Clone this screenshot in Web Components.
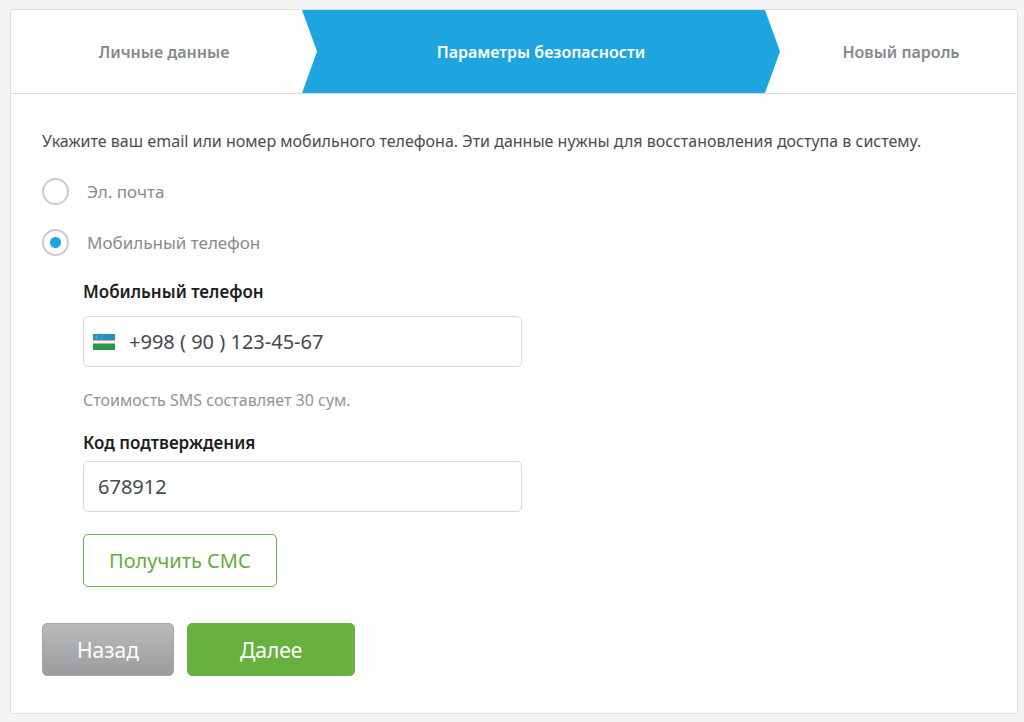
<!DOCTYPE html>
<html lang="ru">
<head>
<meta charset="UTF-8">
<meta name="viewport" content="width=device-width, initial-scale=1">
<title>Параметры безопасности</title>
<style>
    body {
        margin: 0;
        background: #f4f4f4;
        color: #4a4d50;
        font-family: "Noto Sans", "Open Sans", sans-serif;
        font-size: 16px;
        line-height: 24px;
    }
</style>
</head>
<body>
<registration-card>
    <wizard-steps slot="steps">
        <wizard-step>Личные данные</wizard-step>
        <wizard-step active>Параметры безопасности</wizard-step>
        <wizard-step>Новый пароль</wizard-step>
    </wizard-steps>
    <recovery-form>Укажите ваш email или номер мобильного телефона. Эти данные нужны для восстановления доступа в систему.</recovery-form>
</registration-card>

<script>
class RegistrationCard extends HTMLElement {
    constructor() {
        super();
        this.attachShadow({ mode: 'open' });
        this.shadowRoot.innerHTML = `
        <style>
            :host {
                display: block;
                margin: 9px 6px 8px 10px;
                border: 1px solid #dfdfe0;
                border-radius: 4px;
                background: #fefefe;
                overflow: hidden;
            }

            main {
                padding: 35px 31px 37px;
            }
        </style>
        <slot name="steps"></slot>
        <main><slot></slot></main>`;
    }
}

class WizardSteps extends HTMLElement {
    constructor() {
        super();
        this.attachShadow({ mode: 'open' });
        this.shadowRoot.innerHTML = `
        <style>
            nav {
                display: grid;
                grid-template-columns: 291fr 463fr 252fr;
                border-bottom: 1px solid #dcdcdd;
            }
        </style>
        <nav aria-label="Шаги регистрации"><slot></slot></nav>`;
    }
}

class WizardStep extends HTMLElement {
    constructor() {
        super();
        this.attachShadow({ mode: 'open' });
        this.shadowRoot.innerHTML = `
        <style>
            :host {
                --point: 15px;
                display: flex;
                align-items: center;
                justify-content: center;
                height: 83px;
                margin-right: calc(-1 * var(--point));
                color: #85898e;
                font-weight: 600;
            }

            :host(:last-child) {
                margin-right: 0;
                padding-left: 20px;
            }

            :host([active]) {
                background: #1ea5e0;
                color: #fff;
                clip-path: polygon(0 0, calc(100% - var(--point)) 0, 100% 50%, calc(100% - var(--point)) 100%, 0 100%, var(--point) 50%);
            }
        </style>
        <slot></slot>`;
    }
}

class RecoveryForm extends HTMLElement {
    constructor() {
        super();
        this.attachShadow({ mode: 'open' });
        this.shadowRoot.innerHTML = `
        <style>
            :host {
                display: block;
            }

            p {
                margin: 0;
            }

            .options {
                display: grid;
                gap: 24px;
                margin-top: 25px;
            }

            .options label {
                display: flex;
                align-items: center;
                gap: 18px;
                width: fit-content;
                color: #898c8e;
                font-size: 17px;
            }

            input[type="radio"] {
                appearance: none;
                box-sizing: border-box;
                width: 27px;
                height: 27px;
                margin: 0;
                border: 2px solid #cbcbcd;
                border-radius: 50%;
            }

            input[type="radio"]:checked {
                background: radial-gradient(circle, #1ea5e0 5px, transparent 6px);
            }

            .details {
                max-width: 439px;
                margin: 24px 0 36px 41px;
            }

            .note {
                margin: 21px 0 19px;
                color: #929597;
            }

            .details action-button {
                margin-top: 22px;
            }

            .actions {
                display: flex;
                gap: 13px;
            }
        </style>
        <form>
            <p><slot></slot></p>
            <div class="options">
                <label><input type="radio" name="method" value="email">Эл. почта</label>
                <label><input type="radio" name="method" value="phone" checked>Мобильный телефон</label>
            </div>
            <div class="details">
                <text-field label="Мобильный телефон" type="tel" value="+998 ( 90 ) 123-45-67" spaced>
                    <country-flag slot="icon"></country-flag>
                </text-field>
                <p class="note">Стоимость SMS составляет 30 сум.</p>
                <text-field label="Код подтверждения" type="text" value="678912"></text-field>
                <action-button kind="outline">Получить СМС</action-button>
            </div>
            <div class="actions">
                <action-button kind="back">Назад</action-button>
                <action-button kind="next">Далее</action-button>
            </div>
        </form>`;
    }
}

class TextField extends HTMLElement {
    constructor() {
        super();
        this.attachShadow({ mode: 'open' });
    }

    connectedCallback() {
        this.shadowRoot.innerHTML = `
        <style>
            :host {
                display: block;
            }

            label {
                display: block;
                margin-bottom: 6px;
                color: #1c1e20;
                font-size: 17px;
                font-weight: 600;
            }

            :host([spaced]) label {
                margin-bottom: 12px;
            }

            .box {
                display: flex;
                align-items: center;
                box-sizing: border-box;
                height: 51px;
                border: 1px solid #d8d9da;
                border-radius: 5px;
                background: #fff;
            }

            .box:focus-within {
                border-color: #1ea5e0;
            }

            ::slotted(*) {
                margin-left: 9px;
            }

            input {
                flex: 1;
                min-width: 0;
                height: 100%;
                box-sizing: border-box;
                padding: 0 14px;
                border: 0;
                outline: 0;
                background: none;
                color: #46494d;
                font: inherit;
                font-size: 20px;
            }
        </style>
        <label for="field">${this.getAttribute('label')}</label>
        <div class="box">
            <slot name="icon"></slot>
            <input id="field" type="${this.getAttribute('type')}" value="${this.getAttribute('value')}">
        </div>`;
    }
}

class CountryFlag extends HTMLElement {
    constructor() {
        super();
        this.attachShadow({ mode: 'open' });
        this.shadowRoot.innerHTML = `
        <style>
            :host {
                display: block;
            }

            svg {
                display: block;
            }
        </style>
        <svg width="22" height="16" viewBox="0 0 22 16" role="img" aria-label="Узбекистан">
            <rect width="22" height="16" fill="#fbfaf5"/>
            <rect width="22" height="6" fill="#2590c4"/>
            <rect y="6" width="22" height="1" fill="#d9aaa0"/>
            <rect y="9" width="22" height="1" fill="#dfa68e"/>
            <rect y="10" width="22" height="6" fill="#249b4c"/>
            <path d="M4.6 1.3A1.7 1.7 0 1 0 4.6 4.5A2 2 0 0 1 4.6 1.3Z" fill="#5fb2d8"/>
            <g fill="#82c2e0">
                <circle cx="6.5" cy="4.2" r=".4"/>
                <circle cx="8" cy="4.2" r=".4"/>
                <circle cx="9.5" cy="4.2" r=".4"/>
                <circle cx="8" cy="2.8" r=".4"/>
                <circle cx="9.5" cy="2.8" r=".4"/>
                <circle cx="9.5" cy="1.4" r=".4"/>
            </g>
        </svg>`;
    }
}

class ActionButton extends HTMLElement {
    constructor() {
        super();
        this.attachShadow({ mode: 'open' });
        this.shadowRoot.innerHTML = `
        <style>
            :host {
                display: block;
            }

            button {
                display: block;
                height: 53px;
                padding: 0 25px;
                border: 1px solid #67b346;
                border-radius: 5px;
                background: #fff;
                color: #62ad42;
                font: inherit;
                font-size: 20px;
                cursor: pointer;
            }

            :host([kind="back"]) button {
                padding: 0 34px;
                border-color: #a5a6a7;
                background: linear-gradient(#b9babb, #9b9c9d);
                color: #fff;
                font-size: 21px;
            }

            :host([kind="next"]) button {
                padding: 0 52px;
                background: #67b23e;
                color: #fff;
                font-size: 21px;
            }
        </style>
        <button type="button"><slot></slot></button>`;
    }
}

customElements.define('registration-card', RegistrationCard);
customElements.define('wizard-steps', WizardSteps);
customElements.define('wizard-step', WizardStep);
customElements.define('text-field', TextField);
customElements.define('country-flag', CountryFlag);
customElements.define('action-button', ActionButton);
customElements.define('recovery-form', RecoveryForm);
</script>
</body>
</html>
